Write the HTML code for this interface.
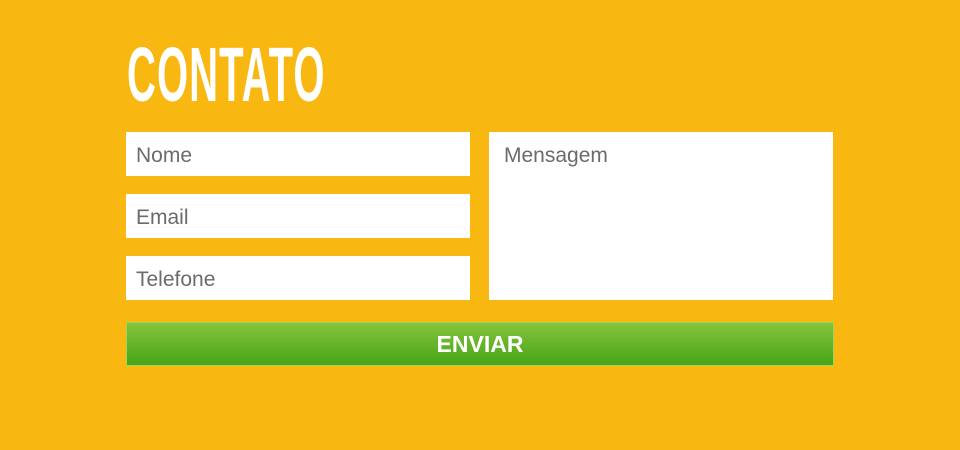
<!DOCTYPE html>
<html><head><style>
body{margin:0;width:960px;height:450px;background:#f9b711;position:relative;overflow:hidden;font-family:"Liberation Sans",sans-serif}
h1{position:absolute;left:127px;top:37px;margin:0;font:bold 77px/1 "Liberation Sans",sans-serif;color:#fff;transform:scaleX(0.52);transform-origin:0 0;letter-spacing:2px;white-space:nowrap}
.f{position:absolute;background:#fff;color:#6b6b6b;font-size:21px;padding-left:10px;box-sizing:border-box;line-height:48px}
.b{position:absolute;left:126px;top:322px;width:708px;height:44px;background:linear-gradient(#86c43c,#47a418);border:1px solid #9fd854;box-sizing:border-box;color:#fff;font-weight:bold;font-size:23px;text-align:center;line-height:42px}
</style></head><body>
<h1>CONTATO</h1>
<div class="f" style="left:126px;top:132px;width:344px;height:44px">Nome</div>
<div class="f" style="left:126px;top:194px;width:344px;height:44px">Email</div>
<div class="f" style="left:126px;top:256px;width:344px;height:44px">Telefone</div>
<div class="f" style="left:489px;top:132px;width:344px;height:168px;padding-left:15px">Mensagem</div>
<div class="b">ENVIAR</div>
</body></html>
